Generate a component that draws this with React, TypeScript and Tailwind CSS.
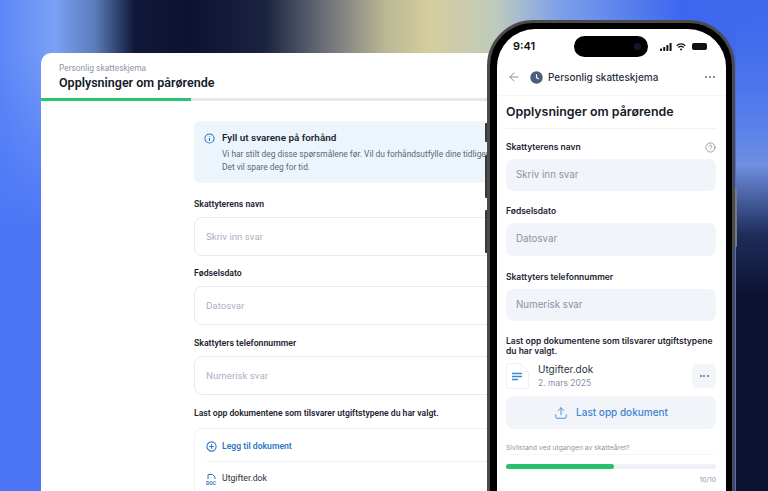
import { ArrowLeft, CircleHelp, Upload } from "lucide-react";

const plex = "font-['Roboto',sans-serif]";
const inter = "font-['Inter',sans-serif]";

function CardField({ label, hint }: { label: string; hint: string }) {
  return (
    <div className="flex flex-col">
      <div className="h-[14px] pt-[2px] flex items-center text-[8.7px] font-semibold text-[#1d2433]">{label}</div>
      <div className="mt-[6px] h-[39px] pt-[1px] flex items-center pl-[11px] border border-[#e6eaee] rounded-[8px] text-[9.7px] text-[#aab3bf]">
        {hint}
      </div>
    </div>
  );
}

function PhoneField({ label, hint, mt, h }: { label: string; hint: string; mt: string; h: string }) {
  return (
    <div className={`flex flex-col ${mt}`}>
      <div className="h-[14px] flex items-center text-[8.5px] font-semibold text-[#1b2230]">{label}</div>
      <div className={`mt-[5px] ${h} flex items-center pl-[10px] rounded-[7px] bg-[#f1f4f9] text-[9.75px] text-[#8a93a3]`}>
        {hint}
      </div>
    </div>
  );
}

export default function App() {
  return (
    <div className="relative w-[768px] h-[491px] overflow-hidden pt-[53px] pl-[41px] [background:linear-gradient(180deg,transparent_20px,#4d76ec_90px,#5f85e8_140px,#6f8fe0_165px,#1d2c5a_235px,#0b1230_300px,#0b1230_100%)_right_top/32px_100%_no-repeat,linear-gradient(180deg,transparent_53px,#4c75f6_230px)_left_top/41px_100%_no-repeat,linear-gradient(90deg,#5b88f8_0,#7ba0f5_55px,#5b7cba_95px,#10183a_135px,#0c1230_190px,#1a2340_265px,#6b7078_325px,#b9b795_385px,#d5cd9c_430px,#bfcbbd_495px,#7ca0ea_560px,#3e67ef_680px,#4069ee_768px)]">
      {/* Desktop card */}
      <div className={`w-[455px] h-[460px] bg-white rounded-tl-[10px] overflow-hidden ${plex}`}>
        <div className="h-[45px] pl-[18px] pt-[8px] flex flex-col">
          <div className="h-[14px] flex items-center text-[8.4px] text-[#8d96a5]">Personlig skatteskjema</div>
          <div className="h-[17px] flex items-center text-[12.5px] font-semibold text-[#141a2a]">Opplysninger om pårørende</div>
        </div>
        <div className="h-[3px] bg-[#e3e8ec]">
          <div className="h-full w-[150px] bg-[#2ac470]" />
        </div>
        <div className="pl-[153px] pt-[20px] flex flex-col">
          <div className="w-[420px] h-[62px] bg-[#edf5fc] rounded-[6px] flex pl-[10px] pt-[10px] gap-[7px]">
            <svg width="11" height="11" viewBox="0 0 12 12" fill="none" className="mt-[2px] shrink-0">
              <circle cx="6" cy="6" r="5" stroke="#2f78c4" strokeWidth="1.1" />
              <path d="M6 5.4V8.6M6 3.4v.8" stroke="#2f78c4" strokeWidth="1.2" />
            </svg>
            <div className="flex flex-col whitespace-nowrap">
              <div className="h-[15px] flex items-center text-[9.9px] font-semibold text-[#1d2433]">Fyll ut svarene på forhånd</div>
              <div className="mt-[1px] h-[14px] flex items-center text-[8.4px] text-[#5c6675]">Vi har stilt deg disse spørsmålene før. Vil du forhåndsutfylle dine tidligere svar?</div>
              <div className="h-[12px] flex items-center text-[8.4px] text-[#5c6675]">Det vil spare deg for tid.</div>
            </div>
          </div>
          <div className="w-[420px] mt-[14px]"><CardField label="Skattyterens navn" hint="Skriv inn svar" /></div>
          <div className="w-[420px] mt-[10px]"><CardField label="Fødselsdato" hint="Datosvar" /></div>
          <div className="w-[420px] mt-[11px]"><CardField label="Skattyters telefonnummer" hint="Numerisk svar" /></div>
          <div className="mt-[11px] h-[14px] flex items-center text-[8.65px] font-semibold text-[#1d2433]">Last opp dokumentene som tilsvarer utgiftstypene du har valgt.</div>
          <div className="w-[420px] mt-[8px] border border-[#eef1f4] rounded-t-[8px] px-[11px]">
            <div className="h-[33px] pt-[2px] flex items-center gap-[5px] border-b border-[#eef1f4] text-[8.65px] font-semibold text-[#2f78c4]">
              <svg width="11" height="11" viewBox="0 0 12 12" fill="none">
                <circle cx="6" cy="6" r="5" stroke="#2f78c4" strokeWidth="1.2" />
                <path d="M3.5 6h5M6 3.5v5" stroke="#2f78c4" strokeWidth="1.2" />
              </svg>
              Legg til dokument
            </div>
            <div className="h-[33px] flex items-center gap-[5px] text-[8.7px] text-[#2a3140]">
              <svg width="11" height="12" viewBox="0 0 11 12" fill="none">
                <path d="M2 6V1.5h4.5L9 4v2" stroke="#2f78c4" strokeWidth="1" />
                <text x="0" y="11.5" fontSize="5" fontWeight="700" fill="#2f78c4" fontFamily="Roboto, sans-serif">DOC</text>
              </svg>
              Utgifter.dok
            </div>
          </div>
        </div>
      </div>

      {/* Phone */}
      <div className={`absolute left-[487px] top-[20px] w-[248px] h-[520px] border-[3px] border-[#4b4b4b] bg-black rounded-[46px] pt-[6px] pl-[7px] pr-[6px] ${inter}`}>
        <div className="absolute left-[-5px] top-[100px] w-[2px] h-[19px] bg-[#3a3a3a] rounded-l-[1px]" />
        <div className="absolute left-[-5px] top-[132px] w-[2px] h-[43px] bg-[#3a3a3a] rounded-l-[1px]" />
        <div className="absolute left-[-5px] top-[187px] w-[2px] h-[43px] bg-[#3a3a3a] rounded-l-[1px]" />
        <div className="absolute right-[-5px] top-[165px] w-[2px] h-[59px] bg-[#77797d] rounded-r-[1px]" />
        <div className="h-full bg-white rounded-[38px] flex flex-col">
          {/* status bar */}
          <div className="mt-[7px] h-[21px] flex items-center pl-[16px] pr-[19px] shrink-0">
            <span className="w-[61px] text-[11px] font-semibold text-[#111]">9:41</span>
            <div className="w-[74px] h-[21px] bg-black rounded-full flex items-center justify-end pr-[7px]">
              <div className="w-[7px] h-[7px] rounded-full bg-[#12172e]" />
            </div>
            <div className="ml-auto flex items-center gap-[4px]">
              <svg width="12" height="8" viewBox="0 0 12 8" fill="#111">
                <rect x="0" y="5.5" width="2" height="2.5" rx=".4" />
                <rect x="3.2" y="4" width="2" height="4" rx=".4" />
                <rect x="6.4" y="2" width="2" height="6" rx=".4" />
                <rect x="9.6" y="0" width="2" height="8" rx=".4" />
              </svg>
              <svg width="10" height="8" viewBox="0 0 10 8" fill="none" stroke="#111">
                <path d="M.6 2.8a6.2 6.2 0 0 1 8.8 0" strokeWidth="1.2" />
                <path d="M2.3 4.5a3.8 3.8 0 0 1 5.4 0" strokeWidth="1.2" />
                <path d="M5 7.8 3.7 6.2a1.9 1.9 0 0 1 2.6 0z" fill="#111" stroke="none" />
              </svg>
              <div className="ml-[2px] w-[15px] h-[7px] rounded-[2px] bg-[#111]" />
            </div>
          </div>
          {/* nav */}
          <div className="h-[39px] pt-[2px] shrink-0 flex items-center pl-[10px] pr-[11px] border-b border-[#f5f6f8]">
            <ArrowLeft size={14} strokeWidth={1.2} color="#5b6577" />
            <svg width="13" height="13" viewBox="0 0 13 13" className="ml-[9px]">
              <circle cx="6.5" cy="6.5" r="6.2" fill="#4d5f7c" />
              <path d="M6.5 3.2v3.5l2.4 1.3" stroke="#fff" strokeWidth="1.1" fill="none" />
            </svg>
            <span className="ml-[5px] text-[10px] font-medium text-[#2a3242]">Personlig skatteskjema</span>
            <div className="ml-auto flex gap-[2px]">
              <i className="w-[2px] h-[2px] rounded-full bg-[#5f6877]" />
              <i className="w-[2px] h-[2px] rounded-full bg-[#5f6877]" />
              <i className="w-[2px] h-[2px] rounded-full bg-[#5f6877]" />
            </div>
          </div>
          <div className="pl-[9px] pr-[10px] flex flex-col">
            <div className="h-[33px] pt-[1px] flex items-center border-b border-[#f1f3f6] text-[12.4px] font-semibold text-[#141a2a]">Opplysninger om pårørende</div>
            <div className="mt-[11px] h-[14px] flex items-center justify-between text-[8.5px] font-semibold text-[#1b2230]">
              Skattyterens navn
              <CircleHelp size={11} strokeWidth={1.2} color="#4f5a6b" />
            </div>
            <div className="mt-[5px] h-[32px] flex items-center pl-[10px] rounded-[7px] bg-[#f1f4f9] text-[9.75px] text-[#8a93a3]">Skriv inn svar</div>
            <PhoneField mt="mt-[13px]" h="h-[33px]" label="Fødselsdato" hint="Datosvar" />
            <PhoneField mt="mt-[14px]" h="h-[32px]" label="Skattyters telefonnummer" hint="Numerisk svar" />
            <div className="mt-[15px] text-[8.5px] leading-[10px] font-semibold text-[#1b2230]">
              Last opp dokumentene som tilsvarer utgiftstypene du har valgt.
            </div>
            <div className="mt-[7px] h-[26px] flex items-center">
              <svg width="23" height="26" viewBox="0 0 23 26" fill="none" className="shrink-0">
                <path d="M3 .5h11.5l8 8V23a2.5 2.5 0 0 1-2.5 2.5H3A2.5 2.5 0 0 1 .5 23V3A2.5 2.5 0 0 1 3 .5Z" fill="#fff" stroke="#eef0f5" />
                <path d="M14.5 .5v6a2 2 0 0 0 2 2h6" stroke="#f3f5f8" />
                <path d="M6 10.5h10M6 13.5h10M6 16.5h6" stroke="#3e85d0" strokeWidth="1.5" />
              </svg>
              <div className="ml-[9px] flex flex-col">
                <span className="h-[14px] flex items-center text-[10px] text-[#2a3242]">Utgifter.dok</span>
                <span className="h-[14px] flex items-center text-[8.5px] text-[#8a93a3]">2. mars 2025</span>
              </div>
              <div className="ml-auto w-[24px] h-[24px] rounded-[5px] bg-[#f1f4f9] flex items-center justify-center gap-[1.5px]">
                <i className="w-[2px] h-[2px] rounded-full bg-[#5f6877]" />
                <i className="w-[2px] h-[2px] rounded-full bg-[#5f6877]" />
                <i className="w-[2px] h-[2px] rounded-full bg-[#5f6877]" />
              </div>
            </div>
            <div className="mt-[7px] h-[33px] rounded-[8px] bg-[#f1f4f9] flex items-center justify-center gap-[8px] text-[10px] font-medium text-[#3e85d0]">
              <Upload size={14} strokeWidth={1.5} color="#3e85d0" />
              Last opp dokument
            </div>
            <div className="mt-[14px] h-[12px] flex items-center border-b border-[#f6f7f9] text-[6.8px] text-[#8f97a5]">Sivilstand ved utgangen av skatteåret?</div>
            <div className="mt-[9px] h-[5px] rounded-full bg-[#eef1f6]">
              <div className="h-full w-[108px] rounded-full bg-[#28c06f]" />
            </div>
            <div className="mt-[6px] text-right text-[6.8px] leading-[10px] text-[#8f97a5]">10/10</div>
          </div>
        </div>
      </div>
    </div>
  );
}
